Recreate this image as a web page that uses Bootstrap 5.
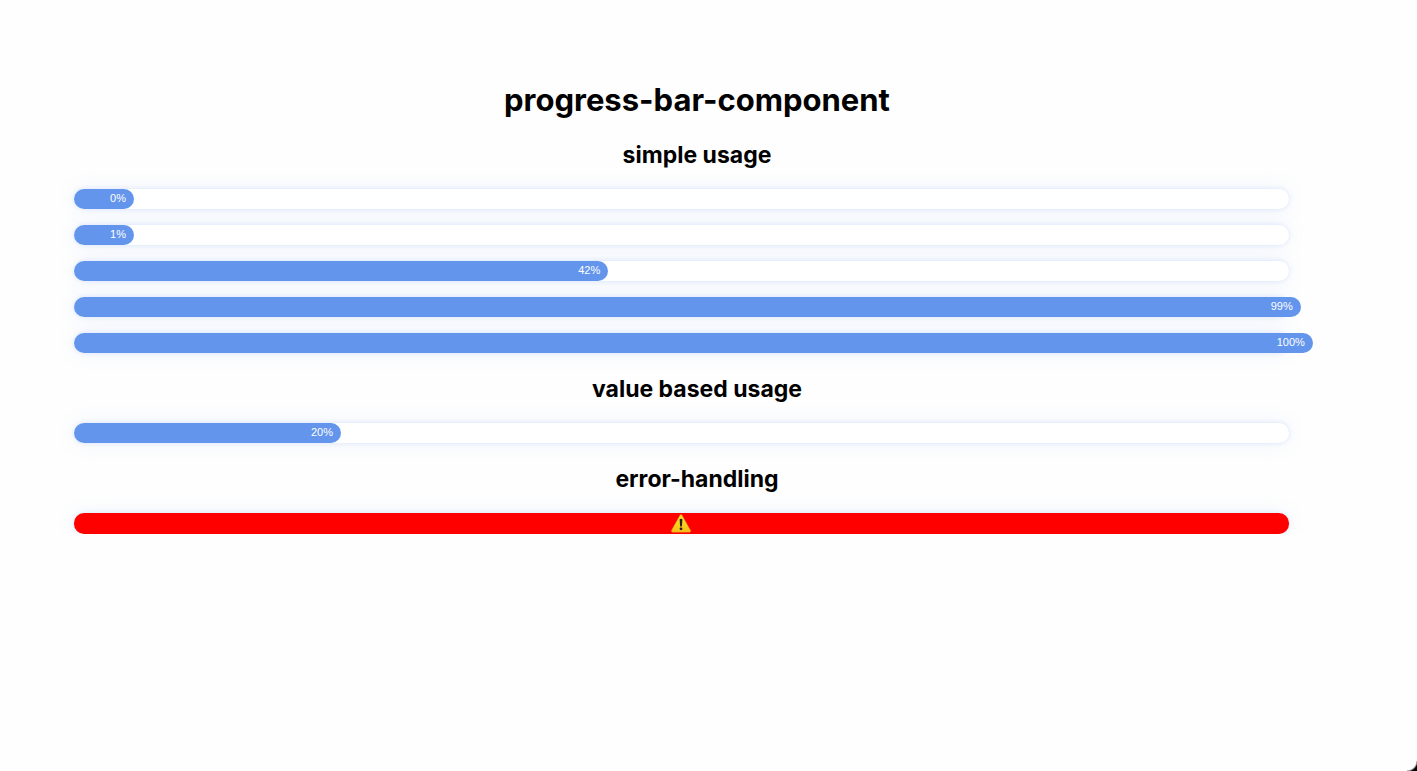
<!DOCTYPE html>
<html lang="en">
<head>
<meta charset="utf-8">
<meta name="viewport" content="width=device-width, initial-scale=1">
<title>progress-bar-component</title>
<link rel="stylesheet" href="https://cdn.jsdelivr.net/npm/bootstrap@5.3.0/dist/css/bootstrap.min.css">
<style>
  body { background: #fefefe; color: #000; font-family: Inter, "Liberation Sans", sans-serif; }
  .demo { padding: 80px 97px 0 74px; }
  h1, h2 { margin: 0; font-weight: 700; color: #000; }
  h1 { font-size: 31px; line-height: 39px; }
  h2 { font-size: 23px; line-height: 30px; margin: 21px 0 19px; }
  .bars { gap: 16px; }
  .progress {
    --bs-progress-height: 20px;
    --bs-progress-bg: #fff;
    --bs-progress-border-radius: 10px;
    --bs-progress-bar-bg: cornflowerblue;
    width: 97.5%;
    overflow: visible;
    box-shadow: 0 0 5px rgba(100, 149, 237, .2), 0 0 20px rgba(100, 149, 237, .1);
  }
  .progress-bar {
    box-sizing: content-box;
    flex: none;
    min-width: 36px;
    padding: 0 8px 2px 16px;
    border-radius: 10px;
    text-align: right;
    font: 11px/18px "Liberation Sans", Arial, sans-serif;
  }
  .progress.failed { --bs-progress-height: 21px; --bs-progress-bg: red; }
  .corner { width: 10px; height: 10px; background: radial-gradient(circle at 0 0, transparent 9px, #000 11px); }
</style>
</head>
<body>
<main class="demo">
  <h1 class="text-center">progress-bar-component</h1>

  <h2 class="text-center">simple usage</h2>
  <div class="bars d-flex flex-column">
    <div class="progress" role="progressbar" aria-label="0 percent" aria-valuenow="0" aria-valuemin="0" aria-valuemax="100"><div class="progress-bar" style="width:0%">0%</div></div>
    <div class="progress" role="progressbar" aria-label="1 percent" aria-valuenow="1" aria-valuemin="0" aria-valuemax="100"><div class="progress-bar" style="width:1%">1%</div></div>
    <div class="progress" role="progressbar" aria-label="42 percent" aria-valuenow="42" aria-valuemin="0" aria-valuemax="100"><div class="progress-bar" style="width:42%">42%</div></div>
    <div class="progress" role="progressbar" aria-label="99 percent" aria-valuenow="99" aria-valuemin="0" aria-valuemax="100"><div class="progress-bar" style="width:99%">99%</div></div>
    <div class="progress" role="progressbar" aria-label="100 percent" aria-valuenow="100" aria-valuemin="0" aria-valuemax="100"><div class="progress-bar" style="width:100%">100%</div></div>
  </div>

  <h2 class="text-center">value based usage</h2>
  <div class="progress" role="progressbar" aria-label="20 percent" aria-valuenow="20" aria-valuemin="0" aria-valuemax="100"><div class="progress-bar" style="width:20%">20%</div></div>

  <h2 class="text-center">error-handling</h2>
  <div class="progress failed justify-content-center align-items-center" role="alert" aria-label="Invalid value">
    <svg width="20" height="19" viewBox="0 0 20 19" aria-hidden="true">
      <defs><linearGradient id="warn" x2="0" y2="1"><stop stop-color="#ffe32e"/><stop offset="1" stop-color="#f9bd17"/></linearGradient></defs>
      <path d="M9 1.2Q10 0 11 1.2L19.6 16.6Q20 18 18.6 18.2H1.4Q0 18 .4 16.6Z" fill="url(#warn)" stroke="#c99a1c" stroke-width=".4"/>
      <path d="M8.6 5.2Q10 4.2 11.4 5.2L10.9 12.2Q10 13 9.1 12.2Z" fill="#222"/>
      <circle cx="10" cy="14.8" r="1.4" fill="#222"/>
    </svg>
  </div>
</main>
<div class="corner position-fixed bottom-0 end-0"></div>
<script src="https://cdn.jsdelivr.net/npm/bootstrap@5.3.0/dist/js/bootstrap.bundle.min.js"></script>
</body>
</html>
